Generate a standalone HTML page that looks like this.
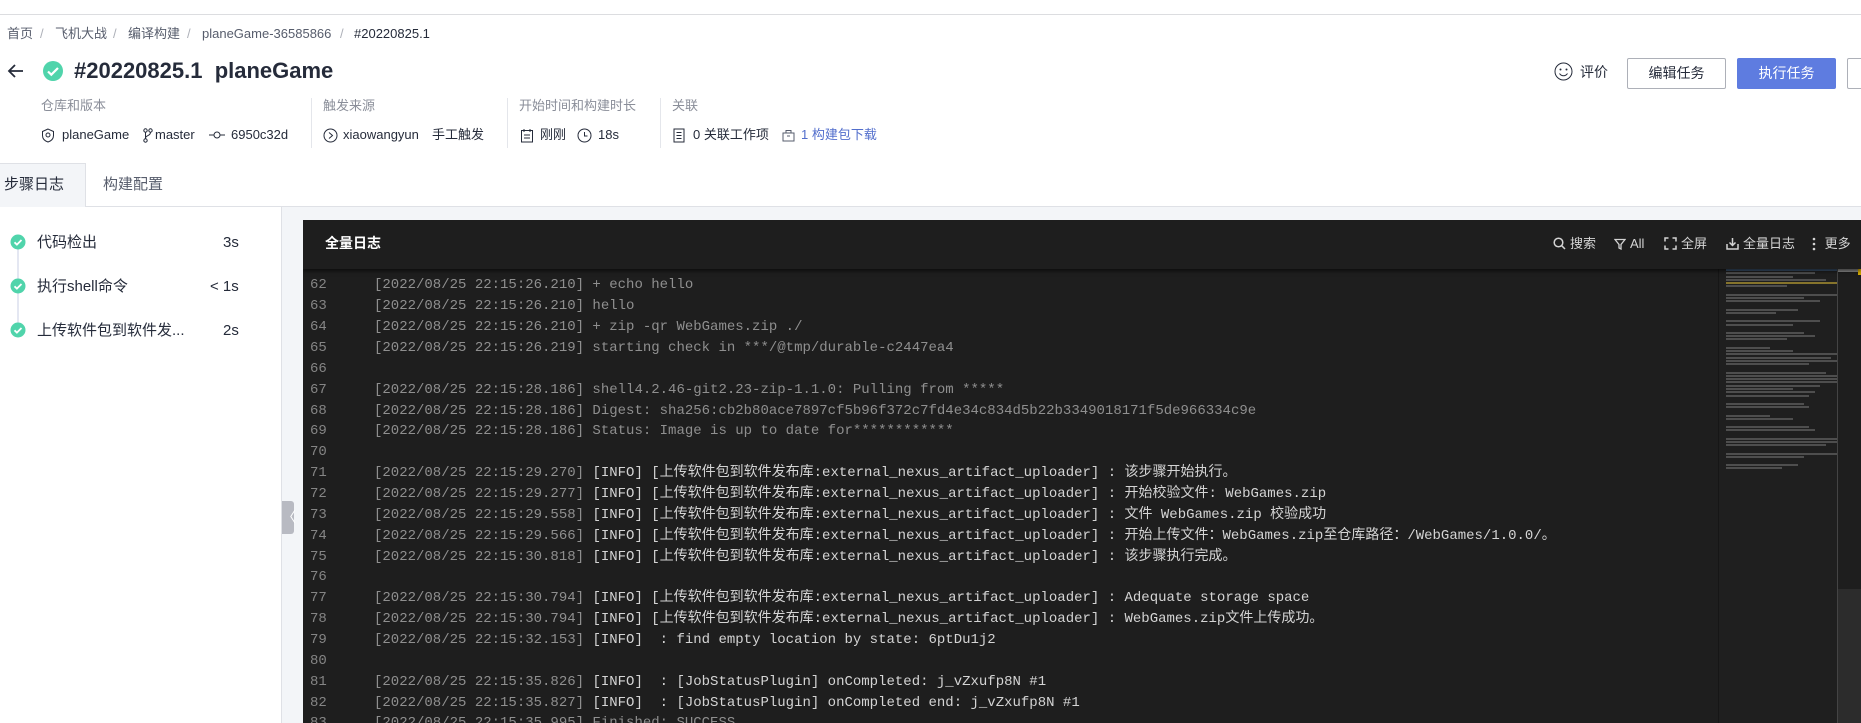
<!DOCTYPE html>
<html><head><meta charset="utf-8">
<style>
*{margin:0;padding:0;box-sizing:border-box}
body{width:1861px;height:723px;overflow:hidden;background:#fff;font-family:"Liberation Sans","Noto Sans CJK SC",sans-serif;color:#252b3a;position:relative}
.a{position:absolute;white-space:nowrap;line-height:20px}
.bc{font-size:13px;color:#575d6c;top:24px}
.lbl{font-size:13px;color:#8a8e99;top:96px}
.val{font-size:13px;color:#252b3a;top:125px}
.sep{position:absolute;top:98px;width:1px;height:50px;background:#e4e6eb}
.btn{position:absolute;top:58px;height:31px;border:1px solid #adb0b8;border-radius:2px;font-size:14px;text-align:center;line-height:29px}
.log{position:absolute;left:303px;top:220px;width:1558px;height:503px;background:#1e1e1e;overflow:hidden}
.lines{position:absolute;left:0;top:34.5px;font-family:"Liberation Mono","Noto Sans CJK SC",monospace;font-size:14px;line-height:20.86px;color:#8f8f8f}
.ln{position:relative;height:20.86px;white-space:pre}
.ln i{font-style:normal;position:absolute;left:7px;width:20px;color:#858585}
.ln span{position:absolute;left:71px}
.w{color:#d4d4d4;font-weight:normal}
.tb{position:absolute;top:0;font-size:13px;color:#d4d4d4;line-height:47px;display:flex;align-items:center;gap:4px}
.mm div{height:2px;margin-bottom:1.3px;background:#5a5a5a;opacity:.8}
</style></head><body>
<div class="a" style="left:0;top:14px;width:1861px;height:1px;background:#dcdde0"></div>

<div class="a bc" style="left:7px">首页</div>
<div class="a bc" style="left:40px;color:#adb0b8">/</div>
<div class="a bc" style="left:55px">飞机大战</div>
<div class="a bc" style="left:113px;color:#adb0b8">/</div>
<div class="a bc" style="left:128px">编译构建</div>
<div class="a bc" style="left:187px;color:#adb0b8">/</div>
<div class="a bc" style="left:202px">planeGame-36585866</div>
<div class="a bc" style="left:340px;color:#adb0b8">/</div>
<div class="a bc" style="left:354px;color:#252b3a">#20220825.1</div>

<svg class="a" style="left:7px;top:62px" width="18" height="18" viewBox="0 0 18 18"><path d="M16 9H2M8 3L2 9l6 6" stroke="#252b3a" stroke-width="1.8" fill="none"/></svg>
<svg class="a" style="left:42px;top:60px" width="22" height="22" viewBox="0 0 22 22"><circle cx="11" cy="11" r="10" fill="#50d4ab"/><path d="M6 11.5l3.3 3.2L16 8" stroke="#fff" stroke-width="2.2" fill="none"/></svg>
<div class="a" style="left:74px;top:56px;font-size:22px;font-weight:bold;line-height:30px">#20220825.1&nbsp; planeGame</div>

<div class="a lbl" style="left:41px">仓库和版本</div>
<div class="sep" style="left:311px"></div>
<div class="a lbl" style="left:323px">触发来源</div>
<div class="sep" style="left:507px"></div>
<div class="a lbl" style="left:519px">开始时间和构建时长</div>
<div class="sep" style="left:660px"></div>
<div class="a lbl" style="left:672px">关联</div>

<svg class="a" style="left:41px;top:128px" width="14" height="15" viewBox="0 0 14 15"><path d="M7 1L1.5 3.5v4c0 3.5 2.5 5.5 5.5 6.5 3-1 5.5-3 5.5-6.5v-4z" stroke="#252b3a" fill="none"/><circle cx="7" cy="7" r="2" stroke="#252b3a" fill="none"/></svg>
<div class="a val" style="left:62px">planeGame</div>
<svg class="a" style="left:143px;top:128px" width="10" height="15" viewBox="0 0 10 15"><circle cx="2.5" cy="2.5" r="1.7" stroke="#252b3a" fill="none"/><circle cx="7.5" cy="2.5" r="1.7" stroke="#252b3a" fill="none"/><circle cx="2.5" cy="12.5" r="1.7" stroke="#252b3a" fill="none"/><path d="M2.5 4.2v6.6M7.5 4.2c0 4-5 3-5 6" stroke="#252b3a" fill="none"/></svg>
<div class="a val" style="left:155px">master</div>
<svg class="a" style="left:209px;top:130px" width="16" height="10" viewBox="0 0 16 10"><circle cx="8" cy="5" r="3" stroke="#252b3a" fill="none"/><path d="M0 5h5M11 5h5" stroke="#252b3a"/></svg>
<div class="a val" style="left:231px">6950c32d</div>
<svg class="a" style="left:323px;top:128px" width="15" height="15" viewBox="0 0 15 15"><circle cx="7.5" cy="7.5" r="6.5" stroke="#252b3a" fill="none"/><path d="M6 4.5l3.5 3-3.5 3" stroke="#252b3a" fill="none"/></svg>
<div class="a val" style="left:343px">xiaowangyun</div>
<div class="a val" style="left:432px">手工触发</div>
<svg class="a" style="left:520px;top:128px" width="14" height="15" viewBox="0 0 14 15"><rect x="1.5" y="2.5" width="11" height="11.5" stroke="#252b3a" fill="none"/><path d="M4 1v3M10 1v3M4 7h6M4 10h6" stroke="#252b3a"/></svg>
<div class="a val" style="left:540px">刚刚</div>
<svg class="a" style="left:577px;top:128px" width="15" height="15" viewBox="0 0 15 15"><circle cx="7.5" cy="7.5" r="6.5" stroke="#252b3a" fill="none"/><path d="M7.5 4v4h3" stroke="#252b3a" fill="none"/></svg>
<div class="a val" style="left:598px">18s</div>
<svg class="a" style="left:673px;top:128px" width="12" height="15" viewBox="0 0 12 15"><rect x="1" y="1" width="10" height="13" stroke="#252b3a" fill="none"/><path d="M3.5 4.5h5M3.5 7.5h5M3.5 10.5h5" stroke="#252b3a"/></svg>
<div class="a val" style="left:693px">0 关联工作项</div>
<svg class="a" style="left:782px;top:129px" width="13" height="13" viewBox="0 0 13 13"><rect x="1" y="4" width="11" height="8" stroke="#575d6c" fill="none"/><path d="M4 4V1.5h5V4M5 7h3" stroke="#575d6c" fill="none"/></svg>
<div class="a val" style="left:801px;color:#526ecc">1 构建包下载</div>

<svg class="a" style="left:1554px;top:62px" width="19" height="19" viewBox="0 0 19 19"><circle cx="9.5" cy="9.5" r="8.5" stroke="#252b3a" fill="none"/><circle cx="6.5" cy="7.5" r="1" fill="#252b3a"/><circle cx="12.5" cy="7.5" r="1" fill="#252b3a"/><path d="M5.5 11.5c2 3 6 3 8 0" stroke="#252b3a" fill="none"/></svg>
<div class="a" style="left:1580px;top:62px;font-size:14px">评价</div>
<div class="btn" style="left:1627px;width:99px;color:#252b3a">编辑任务</div>
<div class="btn" style="left:1737px;width:99px;background:#5e7ce0;border-color:#5e7ce0;color:#fff">执行任务</div>
<div class="btn" style="left:1847px;width:40px"></div>

<div class="a" style="left:0;top:206px;width:1861px;height:1px;background:#dfe1e6"></div>
<div class="a" style="left:0;top:163px;width:86px;height:44px;background:#f3f5f8;border-top:1px solid #dfe1e6;border-right:1px solid #dfe1e6"></div>
<div class="a" style="left:4px;top:175px;font-size:15px;color:#252b3a">步骤日志</div>
<div class="a" style="left:103px;top:175px;font-size:15px;color:#575d6c">构建配置</div>

<div class="a" style="left:281px;top:207px;width:1580px;height:516px;background:#f3f5f8;border-left:1px solid #dfe1e6"></div>
<div class="a" style="left:17px;top:248px;width:2px;height:80px;background:#e4e7f2"></div>
<svg class="a" style="left:10px;top:234px" width="16" height="16" viewBox="0 0 16 16"><circle cx="8" cy="8" r="7.5" fill="#50d4ab"/><path d="M4.5 8.3l2.4 2.3 4.6-4.6" stroke="#fff" stroke-width="1.8" fill="none"/></svg>
<svg class="a" style="left:10px;top:278px" width="16" height="16" viewBox="0 0 16 16"><circle cx="8" cy="8" r="7.5" fill="#50d4ab"/><path d="M4.5 8.3l2.4 2.3 4.6-4.6" stroke="#fff" stroke-width="1.8" fill="none"/></svg>
<svg class="a" style="left:10px;top:322px" width="16" height="16" viewBox="0 0 16 16"><circle cx="8" cy="8" r="7.5" fill="#50d4ab"/><path d="M4.5 8.3l2.4 2.3 4.6-4.6" stroke="#fff" stroke-width="1.8" fill="none"/></svg>
<div class="a" style="left:37px;top:233px;font-size:15px">代码检出</div>
<div class="a" style="left:223px;top:233px;font-size:15px">3s</div>
<div class="a" style="left:37px;top:277px;font-size:15px">执行shell命令</div>
<div class="a" style="left:210px;top:277px;font-size:15px">&lt; 1s</div>
<div class="a" style="left:37px;top:321px;font-size:15px">上传软件包到软件发...</div>
<div class="a" style="left:223px;top:321px;font-size:15px">2s</div>
<div class="a" style="left:282px;top:501px;width:12px;height:33px;background:#b8bac2;border-radius:0 3px 3px 0;color:#fff;font-size:14px;line-height:33px;text-align:center">〈</div>

<div class="log">
<div class="lines">
<div class="ln"><i>61</i></div>
<div class="ln"><i>62</i><span>[2022/08/25 22:15:26.210] + echo hello</span></div>
<div class="ln"><i>63</i><span>[2022/08/25 22:15:26.210] hello</span></div>
<div class="ln"><i>64</i><span>[2022/08/25 22:15:26.210] + zip -qr WebGames.zip ./</span></div>
<div class="ln"><i>65</i><span>[2022/08/25 22:15:26.219] starting check in ***/@tmp/durable-c2447ea4</span></div>
<div class="ln"><i>66</i></div>
<div class="ln"><i>67</i><span>[2022/08/25 22:15:28.186] shell4.2.46-git2.23-zip-1.1.0: Pulling from *****</span></div>
<div class="ln"><i>68</i><span>[2022/08/25 22:15:28.186] Digest: sha256:cb2b80ace7897cf5b96f372c7fd4e34c834d5b22b3349018171f5de966334c9e</span></div>
<div class="ln"><i>69</i><span>[2022/08/25 22:15:28.186] Status: Image is up to date for************</span></div>
<div class="ln"><i>70</i></div>
<div class="ln"><i>71</i><span>[2022/08/25 22:15:29.270] <b class="w">[INFO] [上传软件包到软件发布库:external_nexus_artifact_uploader] : 该步骤开始执行。</b></span></div>
<div class="ln"><i>72</i><span>[2022/08/25 22:15:29.277] <b class="w">[INFO] [上传软件包到软件发布库:external_nexus_artifact_uploader] : 开始校验文件: WebGames.zip</b></span></div>
<div class="ln"><i>73</i><span>[2022/08/25 22:15:29.558] <b class="w">[INFO] [上传软件包到软件发布库:external_nexus_artifact_uploader] : 文件 WebGames.zip 校验成功</b></span></div>
<div class="ln"><i>74</i><span>[2022/08/25 22:15:29.566] <b class="w">[INFO] [上传软件包到软件发布库:external_nexus_artifact_uploader] : 开始上传文件：WebGames.zip至仓库路径：/WebGames/1.0.0/。</b></span></div>
<div class="ln"><i>75</i><span>[2022/08/25 22:15:30.818] <b class="w">[INFO] [上传软件包到软件发布库:external_nexus_artifact_uploader] : 该步骤执行完成。</b></span></div>
<div class="ln"><i>76</i></div>
<div class="ln"><i>77</i><span>[2022/08/25 22:15:30.794] <b class="w">[INFO] [上传软件包到软件发布库:external_nexus_artifact_uploader] : Adequate storage space</b></span></div>
<div class="ln"><i>78</i><span>[2022/08/25 22:15:30.794] <b class="w">[INFO] [上传软件包到软件发布库:external_nexus_artifact_uploader] : WebGames.zip文件上传成功。</b></span></div>
<div class="ln"><i>79</i><span>[2022/08/25 22:15:32.153] <b class="w">[INFO]  : find empty location by state: 6ptDu1j2</b></span></div>
<div class="ln"><i>80</i></div>
<div class="ln"><i>81</i><span>[2022/08/25 22:15:35.826] <b class="w">[INFO]  : [JobStatusPlugin] onCompleted: j_vZxufp8N #1</b></span></div>
<div class="ln"><i>82</i><span>[2022/08/25 22:15:35.827] <b class="w">[INFO]  : [JobStatusPlugin] onCompleted end: j_vZxufp8N #1</b></span></div>
<div class="ln"><i>83</i><span>[2022/08/25 22:15:35.995] Finished: SUCCESS</span></div>
</div>
<div style="position:absolute;left:1415px;top:49px;width:1px;height:460px;background:#161616"></div>
<div style="position:absolute;left:1416px;top:49px;width:118px;height:460px;background:#1f1f1f"></div>
<div class="mm" style="position:absolute;left:1423px;top:49px;width:111px">
<div style="width:100%;background:#3e5a7a"></div><div style="width:80%"></div><div style="width:60%"></div><div style="width:90%"></div><div style="width:100%;background:#a08a30"></div><div style="width:55%"></div>
<div style="width:0;margin-bottom:3px"></div><div style="width:100%"></div><div style="width:70%"></div><div style="width:85%"></div>
<div style="width:0;margin-bottom:3px"></div><div style="width:65%"></div><div style="width:45%"></div>
<div style="width:0;margin-bottom:3px"></div><div style="width:85%"></div><div style="width:60%"></div>
<div style="width:0;margin-bottom:3px"></div><div style="width:70%"></div><div style="width:80%"></div><div style="width:55%"></div>
<div style="width:0;margin-bottom:3px"></div><div style="width:40%"></div><div style="width:60%"></div><div style="width:100%"></div><div style="width:95%"></div><div style="width:100%"></div><div style="width:75%"></div>
<div style="width:0;margin-bottom:3px"></div><div style="width:90%"></div><div style="width:100%"></div><div style="width:100%"></div><div style="width:100%"></div><div style="width:85%"></div><div style="width:60%"></div><div style="width:80%"></div><div style="width:75%"></div>
<div style="width:0;margin-bottom:3px"></div><div style="width:70%"></div><div style="width:75%"></div>
<div style="width:0;margin-bottom:3px"></div><div style="width:40%"></div><div style="width:60%"></div>
<div style="width:0;margin-bottom:3px"></div><div style="width:75%"></div><div style="width:80%"></div>
<div style="width:0;margin-bottom:3px"></div><div style="width:100%"></div><div style="width:100%"></div><div style="width:90%"></div>
<div style="width:0;margin-bottom:3px"></div><div style="width:100%"></div><div style="width:70%"></div>
<div style="width:0;margin-bottom:3px"></div><div style="width:65%"></div><div style="width:50%"></div>
</div>
<div style="position:absolute;left:1534px;top:49px;width:1px;height:460px;background:#444"></div>
<div style="position:absolute;left:1535px;top:49px;width:23px;height:3px;background:#8a8a8a"></div>
<div style="position:absolute;left:1555px;top:49px;width:3px;height:6px;background:#d4a900"></div>
<div style="position:absolute;left:1535px;top:369px;width:23px;height:140px;background:#2c2c2c"></div>

<div style="position:absolute;left:0;top:0;width:1558px;height:49px;background:#1e1e1e;box-shadow:0 2px 4px rgba(0,0,0,.6)">
<div style="position:absolute;left:22px;top:0;line-height:47px;font-size:14px;font-weight:bold;color:#fff">全量日志</div>
<div class="tb" style="left:1250px"><svg width="13" height="13" viewBox="0 0 13 13"><circle cx="5.5" cy="5.5" r="4.3" stroke="#d4d4d4" stroke-width="1.5" fill="none"/><path d="M8.7 8.7L12 12" stroke="#d4d4d4" stroke-width="1.5"/></svg>搜索</div>
<div class="tb" style="left:1311px"><svg width="12" height="12" viewBox="0 0 12 12"><path d="M1 1.5h10L7 6.5V11L5 10V6.5z" stroke="#d4d4d4" stroke-width="1.3" fill="none"/></svg>All</div>
<div class="tb" style="left:1361px"><svg width="13" height="13" viewBox="0 0 13 13"><path d="M1 4.5V1h3.5M8.5 1H12v3.5M12 8.5V12H8.5M4.5 12H1V8.5" stroke="#d4d4d4" stroke-width="1.5" fill="none"/></svg>全屏</div>
<div class="tb" style="left:1423px"><svg width="13" height="13" viewBox="0 0 13 13"><path d="M1 7v5h11V7M6.5 1v7M3.5 5.5l3 3 3-3" stroke="#d4d4d4" stroke-width="1.5" fill="none"/></svg>全量日志</div>
<div class="tb" style="left:1508px"><svg width="6" height="14" viewBox="0 0 6 14"><circle cx="3" cy="2" r="1.3" fill="#d4d4d4"/><circle cx="3" cy="7" r="1.3" fill="#d4d4d4"/><circle cx="3" cy="12" r="1.3" fill="#d4d4d4"/></svg>&nbsp;更多</div>
</div>
</div>
</body></html>
